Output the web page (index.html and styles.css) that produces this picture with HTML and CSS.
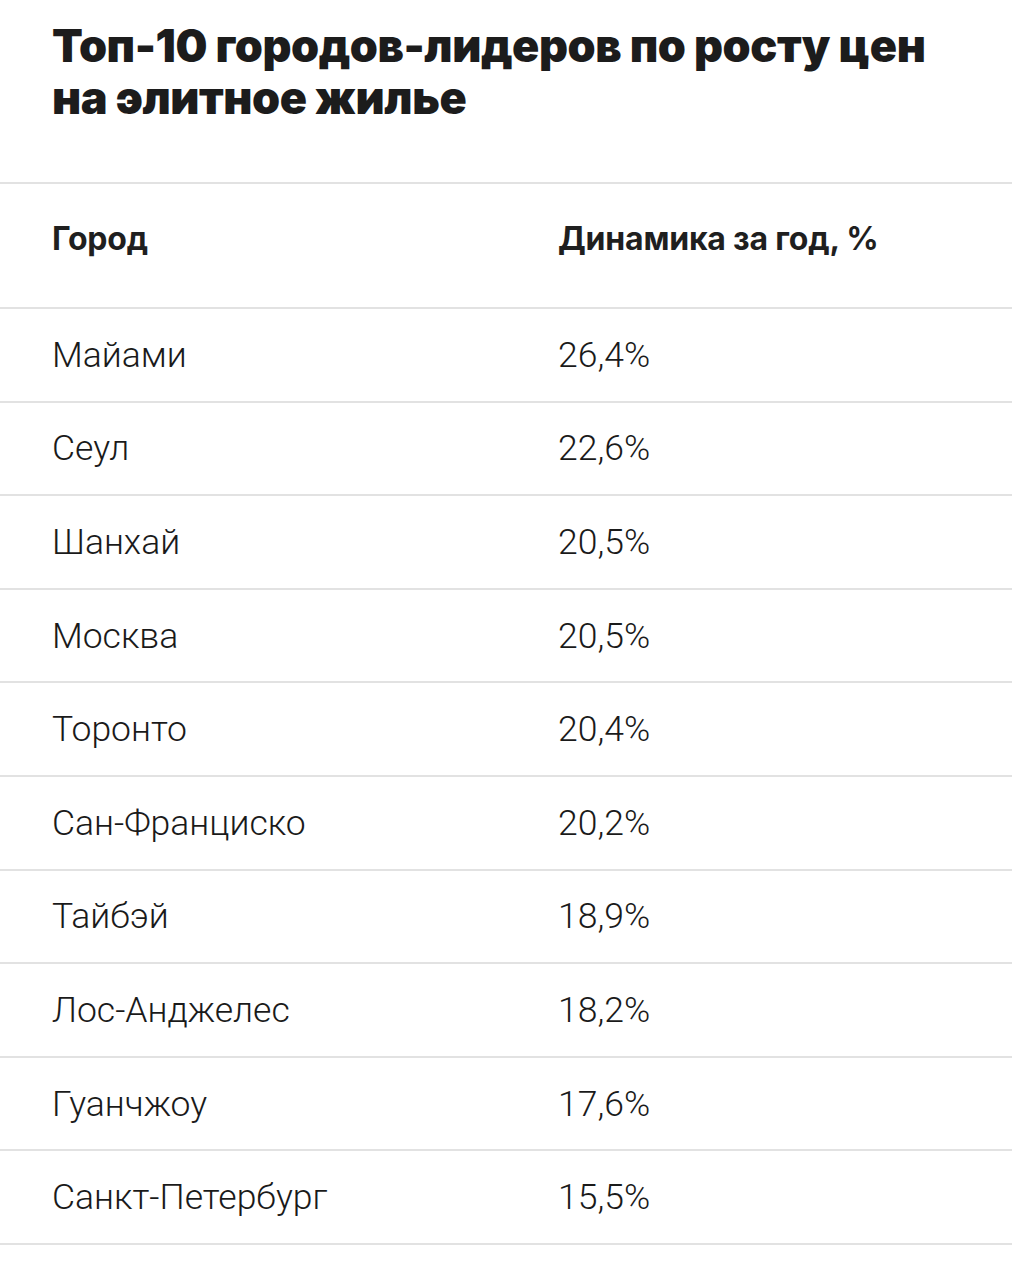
FILE: index.html
```html
<!DOCTYPE html>
<html lang="ru">
<head>
<meta charset="utf-8">
<link rel="stylesheet" href="styles.css">
</head>
<body>
<h1 class="title">Топ-10 городов-лидеров по росту цен на элитное жилье</h1>
<div class="table">
  <div class="row head"><div class="c1">Город</div><div class="c2">Динамика за год, %</div></div>
  <div class="row"><div class="c1">Майами</div><div class="c2">26,4%</div></div>
  <div class="row"><div class="c1">Сеул</div><div class="c2">22,6%</div></div>
  <div class="row"><div class="c1">Шанхай</div><div class="c2">20,5%</div></div>
  <div class="row"><div class="c1">Москва</div><div class="c2">20,5%</div></div>
  <div class="row"><div class="c1">Торонто</div><div class="c2">20,4%</div></div>
  <div class="row"><div class="c1">Сан-Франциско</div><div class="c2">20,2%</div></div>
  <div class="row"><div class="c1">Тайбэй</div><div class="c2">18,9%</div></div>
  <div class="row"><div class="c1">Лос-Анджелес</div><div class="c2">18,2%</div></div>
  <div class="row"><div class="c1">Гуанчжоу</div><div class="c2">17,6%</div></div>
  <div class="row"><div class="c1">Санкт-Петербург</div><div class="c2">15,5%</div></div>
</div>
</body>
</html>
```
FILE: styles.css
```css
html, body {
  margin: 0;
  padding: 0;
  background: #fff;
}
body {
  color: #222;
  font-family: Roboto, "Liberation Sans", sans-serif;
}
.title {
  margin: 0;
  padding: 20px 40px 0 52px;
  font-family: Inter, "Liberation Sans", sans-serif;
  font-weight: 900;
  font-size: 45px;
  line-height: 52px;
  letter-spacing: -0.45px;
  color: #1c1c1c;
  height: 182px;
  box-sizing: border-box;
}
.table {
  border-top: 2px solid #e2e2e2;
}
.row {
  display: grid;
  grid-template-columns: 506px 1fr;
  padding-left: 52px;
  height: 91.6px;
  align-items: center;
  border-bottom: 2px solid #e2e2e2;
  font-size: 35.5px;
  font-weight: 300;
  color: #1a1a1a;
}
.row.head {
  box-sizing: border-box;
  height: 125px;
  padding-bottom: 14px;
  font-family: Inter, "Liberation Sans", sans-serif;
  font-weight: 700;
  font-size: 32px;
  letter-spacing: -0.2px;
  color: #1f1f1f;
}
```
